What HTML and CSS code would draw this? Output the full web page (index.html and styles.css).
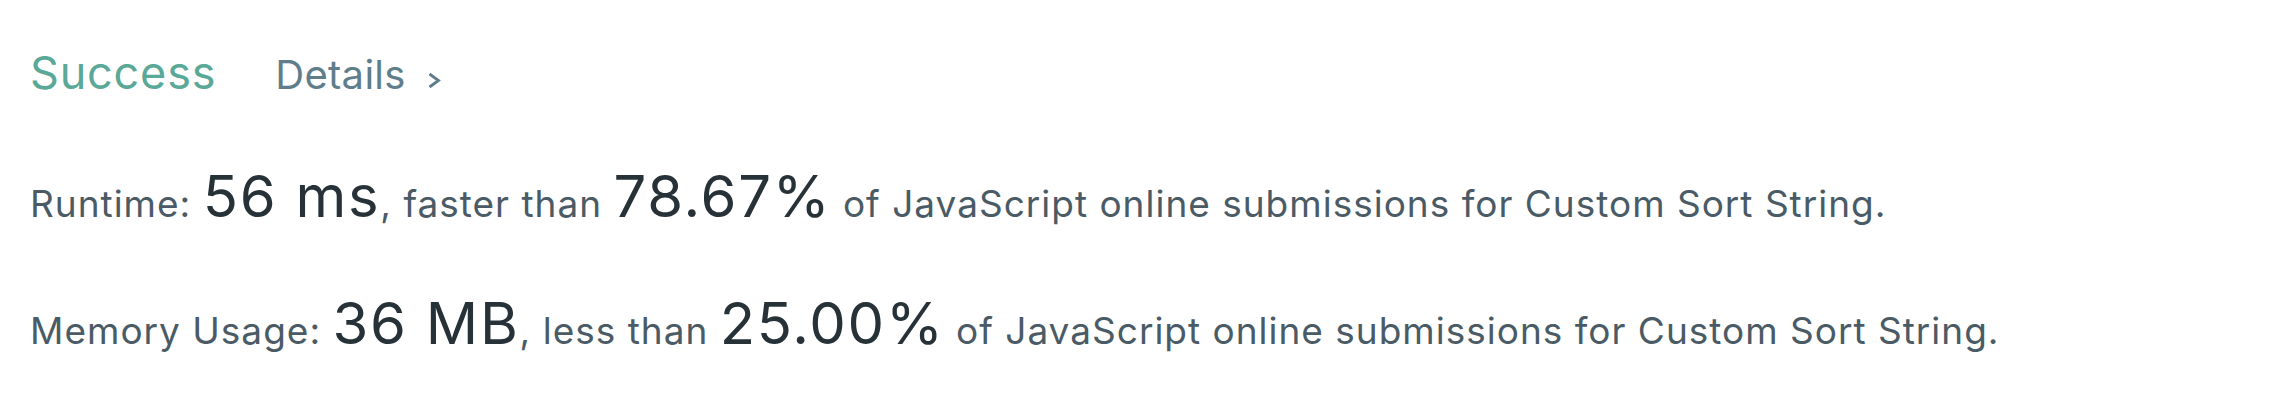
FILE: index.html
```html
<!DOCTYPE html>
<html lang="en">
<head>
<meta charset="utf-8">
<title>Submission result</title>
<link rel="stylesheet" href="styles.css">
</head>
<body>
<main class="result">
  <header class="result-header">
    <span class="status">Success</span>
    <a class="details" href="#">Details<svg class="chevron" viewBox="0 0 14 17" width="14" height="17" aria-hidden="true"><path d="M2.5 2 L11.5 8.5 L2.5 15" fill="none" stroke="currentColor" stroke-width="2.8"/></svg></a>
  </header>
  <p class="stat">Runtime: <span class="big">56 ms</span>, faster than <span class="big">78.67%</span> of JavaScript online submissions for Custom Sort String.</p>
  <p class="stat">Memory Usage: <span class="big">36 MB</span>, less than <span class="big">25.00%</span> of JavaScript online submissions for Custom Sort String.</p>
</main>
</body>
</html>
```

FILE: styles.css
```css
html, body {
  margin: 0;
  background: #ffffff;
}
body {
  font-family: Inter, "Liberation Sans", sans-serif;
}
.result {
  padding: 47px 0 0 30px;
}
.result-header {
  display: flex;
  align-items: baseline;
  gap: 59px;
  margin-bottom: 63px;
}
.status {
  font-size: 45px;
  line-height: 52px;
  letter-spacing: 0.8px;
  color: #5aa898;
}
.details {
  font-size: 40px;
  line-height: 52px;
  letter-spacing: 0.3px;
  color: #607d8b;
  text-decoration: none;
}
.chevron {
  margin-left: 21px;
  vertical-align: 0;
}
.stat {
  margin: 0 0 55px;
  font-size: 37px;
  line-height: 64px;
  letter-spacing: 0.027em;
  color: #4a5b66;
  white-space: nowrap;
}
.big {
  font-size: 58px;
  letter-spacing: 0.03em;
  color: #263238;
}
```
